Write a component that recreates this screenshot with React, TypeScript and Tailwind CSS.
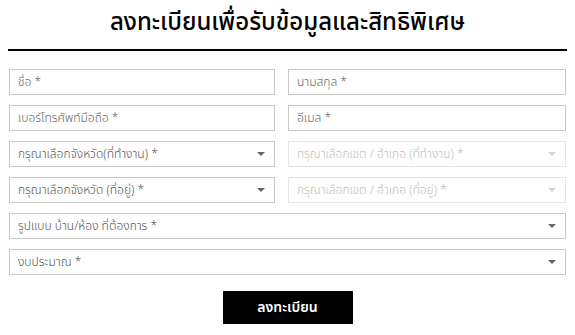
import React from "react";

const Caret = ({ light }: { light?: boolean }) => (
  <svg width="8" height="4" viewBox="0 0 8 4" className={light ? "text-[#d4d4d4]" : "text-[#666]"}>
    <path d="M0 0h8L4 4z" fill="currentColor" />
  </svg>
);

const Field = ({ label, className = "" }: { label: string; className?: string }) => (
  <div className={`h-[26px] border border-[#c8c8c8] bg-white flex items-center px-2 text-[12px] font-light text-[#666] ${className}`}>
    {label}
  </div>
);

const Select = ({ label, disabled, className = "" }: { label: string; disabled?: boolean; className?: string }) => (
  <div
    className={`h-[26px] border bg-white flex items-center justify-between pl-2 pr-[9px] text-[12px] font-light ${
      disabled ? "border-[#e6e6e6] text-[#bdbdbd]" : "border-[#c8c8c8] text-[#555]"
    } ${className}`}
  >
    <span>{label}</span>
    <Caret light={disabled} />
  </div>
);

const App = () => {
  return (
    <div className="w-[575px] h-[335px] bg-white font-['Noto_Sans_Thai','Noto_Sans',sans-serif]">
      <h1 className="text-center text-[24px] leading-none font-medium text-black pt-[11px]">
        ลงทะเบียนเพื่อรับข้อมูลและสิทธิพิเศษ
      </h1>
      <div className="mx-[8px] mt-[14px] h-[2px] bg-black" />
      <div className="px-[9px] pt-[18px] flex flex-col gap-[10px]">
        <div className="grid grid-cols-[266px_1fr] gap-[13px]">
          <Field label="ชื่อ *" />
          <Field label="นามสกุล *" />
        </div>
        <div className="grid grid-cols-[266px_1fr] gap-[13px]">
          <Field label="เบอร์โทรศัพท์มือถือ *" />
          <Field label="อีเมล *" />
        </div>
        <div className="grid grid-cols-[266px_1fr] gap-[13px]">
          <Select label="กรุณาเลือกจังหวัด(ที่ทำงาน) *" />
          <Select label="กรุณาเลือกเขต / อำเภอ (ที่ทำงาน) *" disabled />
        </div>
        <div className="grid grid-cols-[266px_1fr] gap-[13px]">
          <Select label="กรุณาเลือกจังหวัด (ที่อยู่) *" />
          <Select label="กรุณาเลือกเขต / อำเภอ (ที่อยู่) *" disabled />
        </div>
        <Select label="รูปแบบ บ้าน/ห้อง ที่ต้องการ *" />
        <Select label="งบประมาณ *" />
      </div>
      <div className="flex justify-center mt-[16px]">
        <button className="w-[130px] h-[33px] bg-black text-white text-[14px] font-semibold">ลงทะเบียน</button>
      </div>
    </div>
  );
};

export default App;
